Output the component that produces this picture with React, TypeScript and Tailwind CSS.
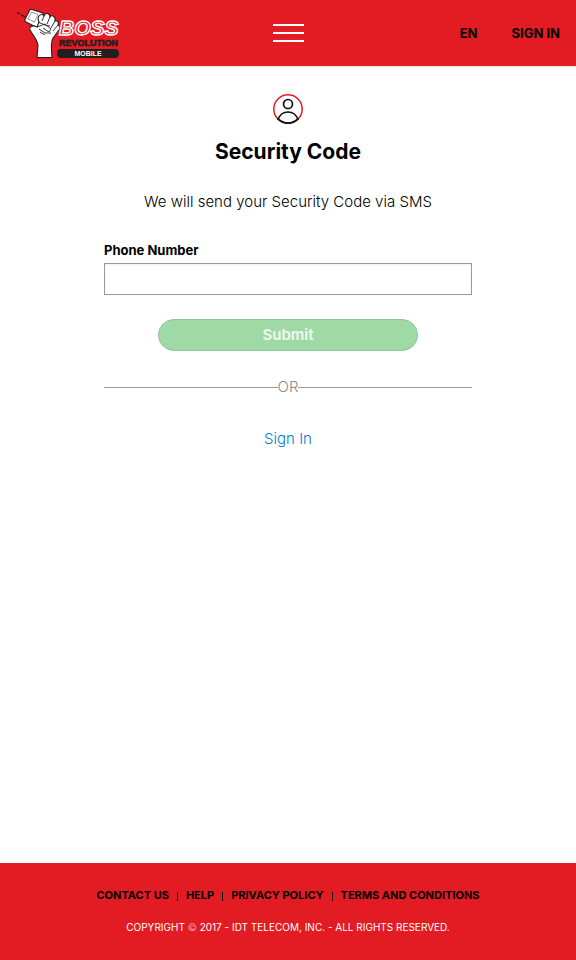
const legal = ["Contact Us", "Help", "Privacy Policy", "Terms and Conditions"];

function Logo() {
  return (
    <svg viewBox="0 0 106 52" className="h-[52px] w-[106px]" role="img" aria-label="Boss Revolution Mobile">
      <path d="M1 5.500L4 7M5 7.500L9 10" stroke="#231f20" strokeWidth="1.300" />
      <path d="M14 2.500Q15 2 16 2.500L27 6L22 21L10 15Q8.500 14 9 12.500Z" fill="#fff" stroke="#231f20" strokeWidth="1.100" strokeLinejoin="round" />
      <path d="M15.500 5L22 7.500L18.500 15L12 12Z" fill="#fff" stroke="#666" strokeWidth=".7" strokeLinejoin="round" />
      <path
        d="M21 50.500L22 38C21 32 16 27 13.500 22C14 19 17 18 21 20L23 15L22 12C22 8 26 6 28 9C29 5 34 6 34 10C36 7 40 10 39 14C42 13 43 16 42 18C45 19 44 22 43 23L37 31C35 34 35 40 36 50.500Z"
        fill="#fff"
        stroke="#231f20"
        strokeWidth="1.100"
        strokeLinejoin="round"
      />
      <path
        d="M28 9L26 14M34 10L31 17M39 14L35 21M42 18L37 24M21 20L29 17L35 22L33 25L27 21M23 22L29 26L35 26M22 15L29 18L34 19M24 25L29 28"
        fill="none"
        stroke="#231f20"
        strokeWidth=".9"
      />
      <text x="43" y="28" className="font-['Liberation_Sans'] text-[21px] font-bold italic" fill="#e31b23" stroke="#fff" strokeWidth="1.400">BOSS</text>
      <text x="43" y="39" className="font-['Liberation_Sans'] text-[9px] font-bold" fill="#231f20" stroke="#231f20" strokeWidth=".6">REVOLUTION</text>
      <rect x="41" y="42" width="62" height="9" rx="4" fill="#231f20" />
      <text x="72" y="49" textAnchor="middle" className="font-['Liberation_Sans'] text-[7px] font-bold" fill="#fff">MOBILE</text>
    </svg>
  );
}

export default function App() {
  return (
    <div className="flex min-h-screen flex-col bg-white font-['Inter',sans-serif] text-black">
      <header className="grid h-[66px] grid-cols-3 items-center bg-[#e31b23] px-4 shadow-sm">
        <a href="#home"><Logo /></a>
        <button aria-label="Menu" className="flex w-8 flex-col gap-[6px] justify-self-center pl-px">
          <span className="h-[2px] w-full bg-white" />
          <span className="h-[2px] w-full bg-white" />
          <span className="h-[2px] w-full bg-white" />
        </button>
        <nav className="flex justify-end gap-[34px] text-[13px] leading-5 font-bold">
          <a href="#language">EN</a>
          <a href="#signin">SIGN IN</a>
        </nav>
      </header>
      <main className="mx-auto flex w-full max-w-[400px] flex-1 flex-col items-center px-4 pt-7">
        <svg viewBox="0 0 30 30" className="size-[30px]" fill="none" aria-hidden="true">
          <circle cx="15" cy="15" r="14.200" stroke="#e31b23" strokeWidth="1.500" />
          <circle cx="15" cy="10" r="4.500" stroke="#111" strokeWidth="1.700" />
          <path d="M5 25C7 20.500 10 18 15 18S23 20.500 25 25Q15 33.500 5 25Z" stroke="#111" strokeWidth="1.700" />
        </svg>
        <h1 className="mt-3 text-[21px] leading-8 font-bold">Security Code</h1>
        <p className="mt-6 text-[15px] leading-5 font-light">We will send your Security Code via SMS</p>
        <form className="mt-7 flex w-full flex-col items-center">
          <label htmlFor="phone" className="self-start text-[13px] leading-5 font-bold">Phone Number</label>
          <input id="phone" type="tel" className="mt-[3px] h-8 w-full border border-[#999] px-2 shadow-[inset_0_1px_2px_#0001] outline-none" />
          <button type="submit" disabled className="mt-6 h-8 w-[260px] rounded-full border border-[#91c699] bg-[#9fdaa6] text-[15px] leading-5 font-semibold text-[#effaf0]">Submit</button>
        </form>
        <div className="mt-6 flex w-full items-center text-[15px] leading-6 font-light text-[#8a8a8a]">
          <span className="h-px flex-1 bg-[#999]" />
          OR
          <span className="h-px flex-1 bg-[#999]" />
        </div>
        <a href="#signin" className="mt-7 text-[15px] leading-6 font-light text-[#0078d7]">Sign In</a>
      </main>
      <footer className="flex h-[97px] flex-col items-center bg-[#e31b23] pt-6 uppercase">
        <nav className="flex items-center text-[11px] leading-4 font-bold">
          {legal.map((item, i) => (
            <span key={item} className="flex items-center">
              {i > 0 && <span className="mx-2 mt-[3px] h-[9px] w-px bg-black" />}
              <a href="#legal">{item}</a>
            </span>
          ))}
        </nav>
        <p className="mt-4 text-[10px] leading-4 text-white">Copyright <span className="font-light opacity-70">©</span> 2017 - IDT Telecom, Inc. - All rights reserved.</p>
      </footer>
    </div>
  );
}
